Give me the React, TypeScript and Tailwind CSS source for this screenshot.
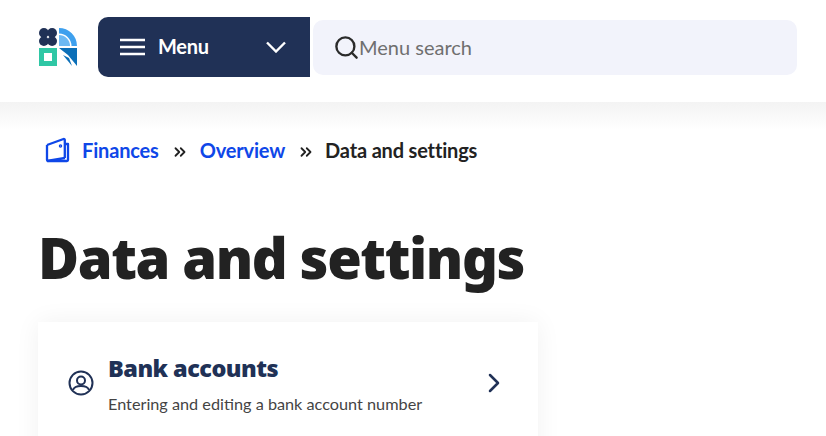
import React from 'react';
import { ChevronRight, ChevronsRight, Search } from 'lucide-react';

const Logo = () => (
  <svg width="38" height="38" viewBox="0 0 38 38" className="shrink-0">
    <g fill="#203156">
      <circle cx="4.9" cy="4.9" r="4.9" />
      <circle cx="13.1" cy="4.9" r="4.9" />
      <circle cx="4.9" cy="13.1" r="4.9" />
      <circle cx="13.1" cy="13.1" r="4.9" />
    </g>
    <path d="M20 0a18 18 0 0 1 18 18h-5.5A12.5 12.5 0 0 0 20 5.5z" fill="#3ea0ee" />
    <path d="M20 7a11 11 0 0 1 11 11H20z" fill="#6db9f3" />
    <path fillRule="evenodd" d="M0 20h18v18H0zM5 25v8h8v-8z" fill="#2fc7a5" />
    <path d="M20 20h18v18l-9-11z" fill="#0b6fb8" />
    <path d="M24 27l6 3 3 8z" fill="#0b6fb8" />
  </svg>
);

const Wallet = () => (
  <svg width="26" height="26" viewBox="0 0 26 26" fill="none" stroke="#0f47e8" strokeWidth="2.3" strokeLinejoin="round" className="shrink-0">
    <path d="M2 8 18.5 2c.7-.2 1.3.2 1.3 1v18" />
    <path d="M2 8v15c0 .6.4 1 1 1h19c.6 0 1-.4 1-1V7h-3" />
    <path d="M2 24l18-3" />
    <circle cx="15.5" cy="9" r="0.6" fill="#0f47e8" />
  </svg>
);

const UserCircle = () => (
  <svg width="26" height="26" viewBox="0 0 26 26" fill="none" stroke="#203156" strokeWidth="2" className="shrink-0">
    <circle cx="13" cy="13" r="11.5" />
    <circle cx="13" cy="10.5" r="4" />
    <path d="M5 20c1-3 4-4 8-4s7 1 8 4" />
  </svg>
);

export default function App() {
  return (
    <div className="h-[436px] w-[826px] overflow-hidden bg-white font-['Lato',sans-serif]">
      <header className="flex h-[102px] items-center pb-[8px] pl-[39px]">
        <Logo />
        <button className="ml-[21px] flex h-[60px] w-[212px] items-center rounded-l-[10px] bg-[#203156] pl-[22px] pr-[24px] text-white">
          <svg width="25" height="18" viewBox="0 0 25 18" stroke="currentColor" strokeWidth="2.4" className="shrink-0">
            <path d="M0 2h25M0 9h25M0 16h25" />
          </svg>
          <span className="ml-[13px] mt-[-2px] text-[20px] font-bold tracking-[-0.3px]">Menu</span>
          <svg width="20" height="12" viewBox="0 0 20 12" fill="none" stroke="currentColor" strokeWidth="2.4" className="ml-auto shrink-0">
            <path d="M1 1.5l9 9 9-9" />
          </svg>
        </button>
        <div className="ml-[3px] flex h-[55px] w-[484px] items-center rounded-[10px] bg-[#f2f3fb] pl-[20px]">
          <Search size={27} strokeWidth={2.1} className="text-[#2b2b2b]" />
          <span className="ml-[-1px] mt-[-1px] text-[20px] text-[#6f6f6f]">Menu search</span>
        </div>
      </header>
      <main className="bg-gradient-to-b from-[#f3f3f3] to-white to-[28px] px-[38px]">
        <nav className="flex h-[96px] items-center text-[20px] font-bold tracking-[-0.17px]">
          <div className="flex items-center pl-[7px]">
            <Wallet />
            <a className="ml-[11px] text-[#0f47e8]">Finances</a>
            <ChevronsRight size={18} strokeWidth={2.4} className="ml-[12px] mt-[3px] text-[#222222]" />
            <a className="ml-[11px] text-[#0f47e8]">Overview</a>
            <ChevronsRight size={18} strokeWidth={2.4} className="ml-[12px] mt-[3px] text-[#222222]" />
            <span className="ml-[10px] text-[#222222]">Data and settings</span>
          </div>
        </nav>
        <h1 className="font-['Noto_Sans',sans-serif] text-[56px] font-black leading-[118px] tracking-[-1.4px] text-[#222222]">
          Data and settings
        </h1>
        <section className="mt-[6px] flex h-[160px] w-[500px] items-start bg-white pl-[30px] pr-[34px] pt-[30px] shadow-[0_0_24px_rgba(0,0,0,0.06)]">
          <div className="mt-[18px]"><UserCircle /></div>
          <div className="ml-[14px]">
            <h2 className="font-['Noto_Sans',sans-serif] text-[23.5px] font-black leading-[32px] tracking-[-0.55px] text-[#203156]">Bank accounts</h2>
            <p className="mt-[9px] text-[16.25px] leading-[22px] text-[#444444]">Entering and editing a bank account number</p>
          </div>
          <ChevronRight size={32} strokeWidth={1.9} className="ml-auto mr-[-6px] mt-[15px] text-[#203156]" />
        </section>
      </main>
    </div>
  );
}
